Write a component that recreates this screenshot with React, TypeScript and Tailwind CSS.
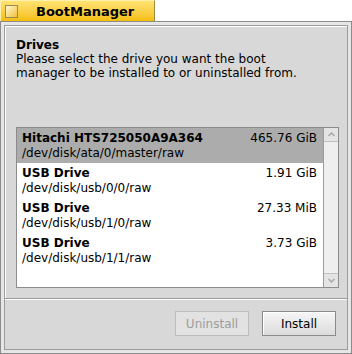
import React from "react";

const rows = [
  { name: "Hitachi HTS725050A9A364", path: "/dev/disk/ata/0/master/raw", size: "465.76 GiB", sel: true },
  { name: "USB Drive", path: "/dev/disk/usb/0/0/raw", size: "1.91 GiB", sel: false },
  { name: "USB Drive", path: "/dev/disk/usb/1/0/raw", size: "27.33 MiB", sel: false },
  { name: "USB Drive", path: "/dev/disk/usb/1/1/raw", size: "3.73 GiB", sel: false },
];

export default function App() {
  return (
    <div className="w-[352px] h-[354px] bg-white font-['DejaVu_Sans',sans-serif] text-[12px] leading-[14px] text-black overflow-hidden">
      {/* Title tab */}
      <div className="w-[155px] h-[21px] border-t border-l border-[#fff2b0] border-r border-r-[#a08a40] bg-gradient-to-b from-[#ffe370] to-[#f5be00] flex items-center">
        <div className="ml-[4px] w-[13px] h-[13px] border border-[#9a8a50] bg-gradient-to-br from-[#fff8d0] to-[#f0c020]" />
        <div className="ml-[18px] font-bold text-[13px] leading-[15px]">BootManager</div>
      </div>
      {/* Window frame */}
      <div className="w-[352px] h-[333px] border border-[#8c8c8c] bg-[#e6e6e6] p-[3px]">
        <div className="w-full h-full border border-[#9c9c9c] bg-[#d8d8d8] flex flex-col">
          {/* Top panel */}
          <div className="h-[272px] flex flex-col pt-[11px] pl-[10px] pr-[8px] border-t border-l border-white">
            <div className="font-bold">Drives</div>
            <div>Please select the drive you want the boot</div>
            <div>manager to be installed to or uninstalled from.</div>
            <div className="mt-[47px] h-[161px] border border-[#8c8c8c] flex bg-white">
              <div className="flex-1 flex flex-col">
                {rows.map((r, i) => (
                  <div
                    key={i}
                    className={`h-[35px] pt-[3px] pl-[5px] pr-[6px] leading-[15px] ${r.sel ? "bg-[#acacac]" : "bg-white"}`}
                  >
                    <div className="flex justify-between">
                      <span className="font-bold">{r.name}</span>
                      <span>{r.size}</span>
                    </div>
                    <div>{r.path}</div>
                  </div>
                ))}
              </div>
              <div className="w-[15px] border-l border-[#9c9c9c] bg-[#ececec] flex flex-col">
                <div className="h-[14px] border-b border-[#c0c0c0] bg-[#e4e4e4] flex items-center justify-center">
                  <svg width="7" height="5" viewBox="0 0 7 5">
                    <path d="M0.5 4 L3.5 1 L6.5 4" fill="none" stroke="#a8a8a8" strokeWidth="1.5" />
                  </svg>
                </div>
                <div className="flex-1 bg-[#efefef]" />
                <div className="h-[14px] border-t border-[#c0c0c0] bg-[#e4e4e4] flex items-center justify-center">
                  <svg width="7" height="5" viewBox="0 0 7 5">
                    <path d="M0.5 1 L3.5 4 L6.5 1" fill="none" stroke="#a8a8a8" strokeWidth="1.5" />
                  </svg>
                </div>
              </div>
            </div>
          </div>
          {/* separator */}
          <div className="h-px bg-[#999999]" />
          {/* Bottom panel */}
          <div className="flex-1 flex justify-end items-start pt-[11px] pr-[11px] gap-[13px] border-t border-white">
            <div className="w-[74px] h-[25px] border border-[#bdbdbd] bg-[#e2e2e2] flex items-center justify-center text-[#9c9c9c]">
              Uninstall
            </div>
            <div className="w-[74px] h-[25px] border border-[#8a8a8a] bg-gradient-to-b from-[#f6f6f6] to-[#dcdcdc] flex items-center justify-center shadow-[inset_1px_1px_0_#ffffff]">
              Install
            </div>
          </div>
        </div>
      </div>
    </div>
  );
}
